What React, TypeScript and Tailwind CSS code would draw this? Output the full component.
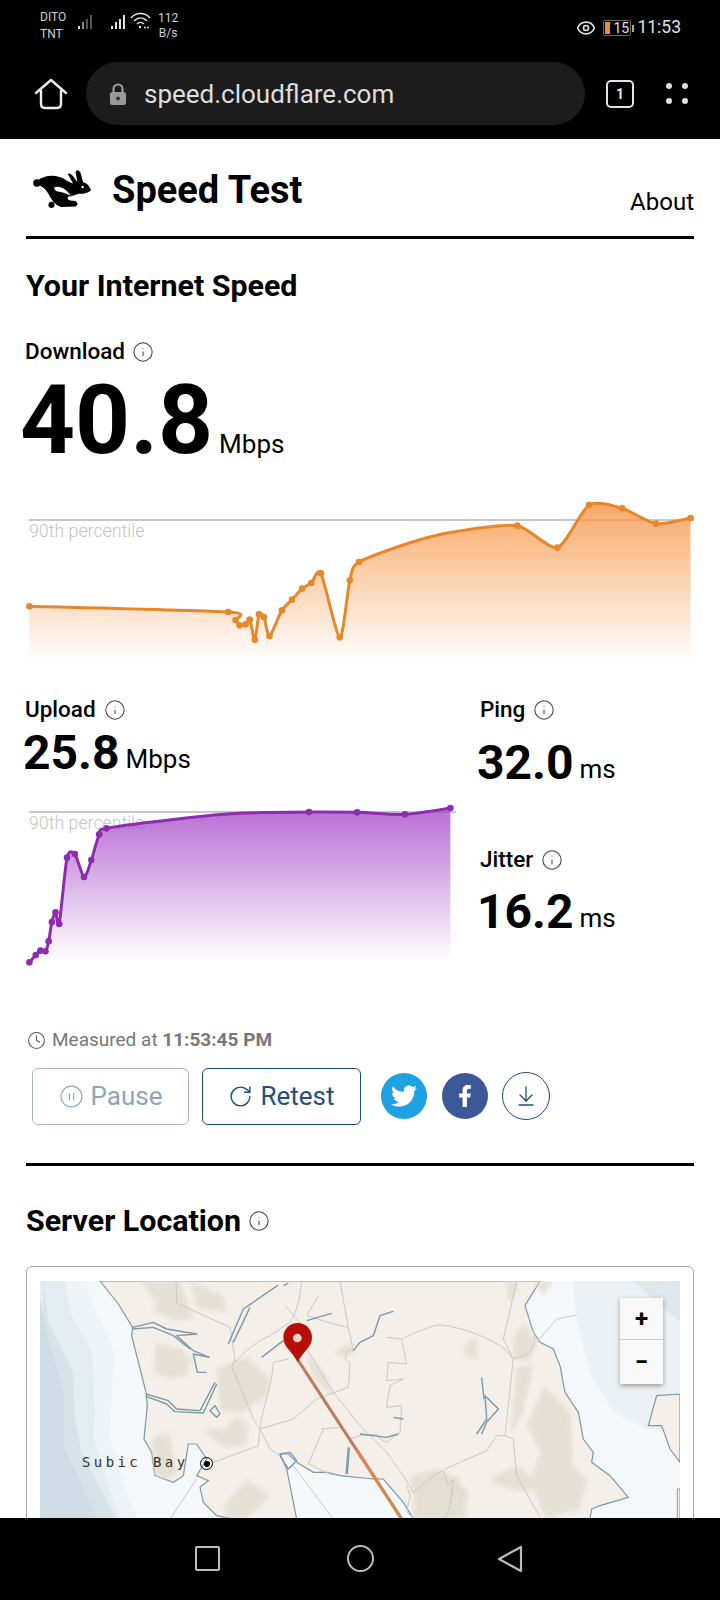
import React from "react";
import { Info, Clock, CirclePause, RotateCw, ArrowDownToLine, Eye } from "lucide-react";
import { FaTwitter, FaFacebookF } from "react-icons/fa";

type P = [number, number, number?];

function smooth(p: P[]) {
  let d = `M${p[0][0].toFixed(1)} ${p[0][1].toFixed(1)}`;
  for (let i = 0; i < p.length - 1; i++) {
    const a = p[Math.max(i - 1, 0)], b = p[i], c = p[i + 1], e = p[Math.min(i + 2, p.length - 1)];
    const k = 0.12;
    d += ` C${(b[0] + (c[0] - a[0]) * k).toFixed(1)} ${(b[1] + (c[1] - a[1]) * k).toFixed(1)} ${(c[0] - (e[0] - b[0]) * k).toFixed(1)} ${(c[1] - (e[1] - b[1]) * k).toFixed(1)} ${c[0].toFixed(1)} ${c[1].toFixed(1)}`;
  }
  return d;
}

const dl: P[] = ([
  [64, 409], [497, 426], [513, 450], [522, 466], [535, 463], [544, 449], [555, 509], [564, 433], [575, 441], [587, 498],
  [614, 421], [636, 389], [658, 356], [678, 339], [699, 310], [740, 502], [762, 331], [782, 276], [900, 215, 0], [1000, 183, 0], [1127, 167],
  [1214, 233], [1283, 105], [1355, 115], [1429, 161], [1504, 144],
] as P[]).map(([x, y, s]) => [x / 2.178 - 26, y / 3, s] as P);

const ul: P[] = ([
  [64, 817], [78, 795], [88, 782], [99, 784], [106, 754], [113, 696], [121, 667], [129, 702], [146, 503], [163, 492], [183, 561],
  [199, 510], [216, 433], [232, 415], [400, 385, 0], [520, 370, 0], [673, 366], [778, 367], [882, 373], [981, 354],
] as P[]).map(([x, y, s]) => [x / 2.178 - 26, y / 3 - 100, s] as P);

function Chart({ pts, w, h, bottom, line, top, id, rule, label }: { pts: P[]; w: number; h: number; bottom: number; line: string; top: string; id: string; rule: number; label: number }) {
  const d = smooth(pts);
  const first = pts[0], last = pts[pts.length - 1];
  return (
    <svg width={w} height={h} viewBox={`0 0 ${w} ${h}`} className="block overflow-visible">
      <defs>
        <linearGradient id={id} gradientUnits="userSpaceOnUse" x1="0" y1={rule - 15} x2="0" y2={bottom}>
          <stop offset="0" stopColor={top} stopOpacity="0.85" />
          <stop offset="1" stopColor={top} stopOpacity="0" />
        </linearGradient>
      </defs>
      <line x1="3" x2={w} y1={rule} y2={rule} stroke="#b5b5b5" strokeWidth="1.5" />
      <text x="3" y={label} fontSize="17.8" fill="#c4c4c4" fontFamily="Roboto, sans-serif" fontWeight="300">90th percentile</text>
      <path d={`${d} L${last[0]} ${bottom} L${first[0]} ${bottom} Z`} fill={`url(#${id})`} />
      <path d={d} fill="none" stroke={line} strokeWidth="3" strokeLinejoin="round" />
      {pts.filter((p) => p[2] !== 0).map((p, i) => (
        <circle key={i} cx={p[0]} cy={p[1]} r="3.3" fill={line} />
      ))}
    </svg>
  );
}

function I({ size = 22 }: { size?: number }) {
  return <Info size={size} strokeWidth={1.15} className="text-[#444] shrink-0" />;
}

function Rabbit() {
  return (
    <svg width="60" height="42" viewBox="38 48 176 124" fill="#000">
      <circle cx="52" cy="92" r="11" />
      <path d="M55 84 C75 68 110 66 135 82 C145 88 152 92 160 94 C172 84 192 88 203 98 L212 112 C205 122 190 124 176 124 C165 127 155 132 145 132 C140 138 142 144 160 145 C174 146 175 160 165 162 L125 163 C112 160 100 150 92 135 C85 120 72 104 60 100 Z" />
      <path d="M160 96 L143 66 C150 60 160 72 172 92 Z" />
      <path d="M172 92 L166 60 C170 50 178 54 182 66 L188 90 Z" />
      <circle cx="95" cy="157" r="9" />
      <path d="M102 106 C120 98 140 112 152 130 C136 122 120 118 108 116 Z" fill="#fff" />
      <circle cx="187" cy="104" r="3.5" fill="#fff" />
    </svg>
  );
}

function Bars({ dim }: { dim?: boolean }) {
  return (
    <svg width="18" height="18" viewBox="0 0 18 18">
      {[[1, 14, 3], [5, 10, 7], [9, 7, 10], [13, 3, 14]].map(([x, y, h], i) => (
        <rect key={i} x={x} y={y} width="2" height={h} fill={dim ? (i === 0 ? "#ddd" : i === 1 ? "#888" : "#555") : "#e4e4e4"} />
      ))}
    </svg>
  );
}

function MapArt() {
  const road = "#cbcac4";
  const water = "#7d98a8";
  const rp = ["M408 6 L410 72 L570 145 L585 240 L575 262 L640 420 L660 450 L690 510 L720 530",
    "M785 6 C780 60 770 100 750 130 L690 170 C640 190 590 240 575 262",
    "M835 50 L800 110 L880 135 L925 145 L900 6",
    "M925 145 L940 215 C925 200 900 245 930 250 L925 325 L830 360 L760 420 L660 450 L655 500 L520 550",
    "M745 240 L700 250 C695 330 670 370 660 450",
    "M735 80 L775 125 L800 210 L880 340 L960 440 L1040 520 L1090 590 L1120 640",
    "M845 450 L905 445 L930 480 L960 470 L1010 465 L1020 480 L1040 490 L1080 460 L1085 380 L1040 385 L1050 320 L1090 300 L1040 305 L1045 250 L1100 255 L1085 180 L1040 175",
    "M1085 180 C1150 150 1190 135 1205 138 C1260 145 1340 170 1395 210 L1420 240 L1395 470 L1370 470 L1340 515 L1215 570",
    "M1420 240 L1390 180 L1430 6",
    "M1395 470 L1420 480 L1430 590 L1500 715",
    "M1490 190 L1550 120 L1610 108",
    "M1420 240 C1480 230 1490 190 1480 160",
    "M1120 640 L1180 590 L1210 575 L1225 620 L1240 600 L1230 680 L1215 720",
    "M850 450 L805 555 L880 590",
    "M390 720 L470 600",
    "M760 560 L880 720",
    "M1100 620 L1110 650 L1100 700 L1125 720",
  ];
  const hills = [
    "M300 6 L420 6 L460 120 L400 125 L340 95 L345 65 Z",
    "M450 6 L550 50 L560 100 L470 90 Z",
    "M345 190 L420 210 L455 240 L435 290 L390 300 L340 280 Z",
    "M530 270 L620 230 L690 300 L680 350 L610 400 L540 400 Z",
    "M590 410 L625 440 L620 500 L550 505 L490 455 L560 445 Z",
    "M335 480 L385 455 L400 530 L410 590 L370 600 L345 590 Z",
    "M550 680 L620 600 L690 650 L620 720 L560 720 Z",
    "M890 210 L935 190 L940 230 L890 235 Z",
    "M800 220 L860 290 L880 350 L820 300 Z",
    "M1110 590 L1190 570 L1260 600 L1280 720 L1130 720 Z",
    "M1400 6 L1440 6 L1420 60 L1400 60 Z",
    "M1420 180 L1450 130 L1490 190 L1470 250 L1420 240 Z",
    "M1430 260 L1480 260 L1450 400 L1410 470 Z",
    "M1350 600 L1430 560 L1500 610 L1460 640 L1370 620 Z",
    "M1510 320 L1590 400 L1600 560 L1640 600 L1620 690 L1520 720 L1470 610 L1500 520 L1460 440 Z",
    "M1480 10 L1540 6 L1510 50 Z",
    "M1500 560 L1540 500 L1550 620 L1510 640 Z",
    "M1270 200 L1310 175 L1315 240 L1280 240 Z",
  ];
  return (
    <svg width="640" height="238" viewBox="0 6 1920 714" preserveAspectRatio="none" className="block">
      <defs>
        <filter id="soft" x="-10%" y="-10%" width="120%" height="120%"><feGaussianBlur stdDeviation="7" /></filter>
      </defs>
      <rect x="0" y="0" width="1920" height="720" fill="#f5f8fb" />
      <path d="M1600 6 L1920 6 L1920 460 L1820 450 L1720 400 L1650 280 L1610 120 Z" fill="#ebf1f5" />
      <path d="M1780 6 L1920 6 L1920 130 L1840 60 Z" fill="#dde7ec" />
      <path d="M140 6 L150 60 L225 220 L212 400 L210 480 L260 640 L295 720 L0 720 L0 6 Z" fill="#edf3f7" />
      <path d="M75 6 L90 100 L155 220 L165 400 L160 480 L210 640 L240 720 L0 720 L0 6 Z" fill="#e3ecf1" />
      <path d="M10 6 L25 130 L100 280 L105 420 L125 530 L190 640 L225 720 L0 720 Z" fill="#d6e3ea" />
      <path d="M0 60 L30 200 L70 330 L70 500 L140 650 L170 720 L0 720 Z" fill="#cedde5" />
      <path d="M180 6 L235 75 L278 145 L275 170 L318 340 L322 380 L312 480 L335 520 L345 590 L400 610 L430 590 L445 495 L470 495 L500 540 L470 590 L505 605 L480 625 L490 670 L530 710 L580 720 L770 720 L740 570 L720 525 L745 525 L770 550 L820 580 L860 580 L900 590 L1000 600 L1030 600 L1090 670 L1120 720 L1650 720 L1655 690 L1680 680 L1765 655 L1710 590 L1655 550 L1660 520 L1630 480 L1615 400 L1575 340 L1560 260 L1540 210 L1500 190 L1480 160 L1455 80 L1500 6 Z" fill="#f4efe9" stroke={water} strokeWidth="1.2" vectorEffect="non-scaling-stroke" />
      <path d="M1825 440 L1850 350 L1920 345 L1920 550 L1890 510 L1865 440 Z" fill="#f4efe9" stroke={water} strokeWidth="1.2" vectorEffect="non-scaling-stroke" />
      <path d="M1912 630 L1920 630 L1920 720 L1912 720 Z" fill="#f4efe9" stroke={water} strokeWidth="1" vectorEffect="non-scaling-stroke" />
      <g filter="url(#soft)" opacity="0.8">
        {hills.map((d, i) => <path key={i} d={d} fill="#e2ddd0" />)}
        <path d="M1120 620 L1180 590 L1240 600 L1290 640 L1260 720 L1120 720 Z" fill="#e2dccd" />
      </g>
      <g fill="none" stroke={road} strokeWidth="1">
        {rp.map((d, i) => <path key={i} d={d} vectorEffect="non-scaling-stroke" />)}
      </g>
      <g fill="none" stroke={water} strokeWidth="1.4" strokeLinejoin="round">
        {[
          "M278 145 L340 130 L380 150 L470 165 L410 170 L460 215 L508 235 L460 225 L472 280 L500 280",
          "M278 150 L340 145 L400 170 L450 210",
          "M318 345 L385 365 L410 390 L480 395 L525 310",
          "M318 352 L380 375 L405 398 L490 402 L530 315",
          "M510 395 L525 380 L540 405 L530 415 Z",
          "M565 195 L610 90 L715 18",
          "M580 190 L630 85",
          "M730 20 L745 12",
          "M665 235 L730 185",
          "M800 125 L875 103",
          "M940 215 L960 190 L1000 170 L1020 110 L1060 97",
          "M720 525 L750 520 L770 545 L745 570 L720 530",
          "M1325 295 L1332 360",
          "M1310 465 L1340 420 L1335 350 L1375 390 L1340 430 L1325 465",
          "M1060 415 L1090 420",
          "M960 465 L1040 475 L1075 465",
          "M925 505 L918 585",
          "M928 505 L922 585",
        ].map((d, i) => <path key={i} d={d} vectorEffect="non-scaling-stroke" />)}
      </g>
      <line x1="775" y1="245" x2="1085" y2="720" stroke="#bd7a5c" strokeWidth="3" vectorEffect="non-scaling-stroke" />
      <line x1="950" y1="512" x2="1085" y2="720" stroke="#d58a50" strokeWidth="3" vectorEffect="non-scaling-stroke" />
      <path d="M773 250 C755 215 730 205 730 175 C730 150 750 132 773 132 C796 132 816 150 816 175 C816 205 791 215 773 250 Z" fill="#b70f08" />
      <ellipse cx="772" cy="177" rx="13" ry="13" fill="#f1d4c8" />
    </svg>
  );
}

export default function App() {
  return (
    <div className="h-[1600px] w-[720px] flex flex-col overflow-hidden bg-white text-black font-['Roboto',sans-serif]">
      <header className="bg-black h-[139px] shrink-0 flex flex-col">
        <div className="h-[62px] flex items-start justify-between pl-[40px] pr-[38px] pt-[9px] text-[#d0d0d0]">
          <div className="flex items-start">
            <div className="text-[12px] leading-[17px] w-[37px]"><div>DITO</div><div>TNT</div></div>
            <div className="mt-[3px] flex items-center gap-[15px]"><Bars dim /><div className="flex items-center gap-[2px]"><Bars />
              <svg width="21" height="18" viewBox="0 0 21 18" fill="none" stroke="#e4e4e4" strokeWidth="1.6"><path d="M1 6 C6 0 15 0 20 6" /><path d="M4 9 C8 5 13 5 17 9" /><path d="M7 12 C9 10 12 10 14 12" /><circle cx="10" cy="15" r="1.2" fill="#e4e4e4" stroke="none" /><circle cx="15" cy="15.5" r="1" fill="#e4e4e4" stroke="none" /><circle cx="18" cy="15.5" r="1" fill="#e4e4e4" stroke="none" /></svg></div></div>
            <div className="text-[12px] leading-[15px] ml-[7px] mt-[2px] text-center"><div>112</div><div>B/s</div></div>
          </div>
          <div className="flex items-center mt-[9px] text-[#e0e0e0]">
            <Eye size={20} strokeWidth={2} />
            <div className="ml-[7px] relative h-[16px] w-[28px] border border-[#666] rounded-[2px] flex items-center text-[14px] leading-none">
              <div className="w-[5px] h-[12px] ml-[1px] bg-[#e8912f]" /><span className="ml-[3px]">15</span>
            </div>
            <div className="w-[2px] h-[7px] bg-[#aaa] ml-[1px]" />
            <span className="text-[17.5px] leading-none ml-[3px] mr-[1px]">11:53</span>
          </div>
        </div>
        <div className="flex items-center pl-[34px]">
          <svg width="34" height="32" viewBox="0 0 34 32" fill="none" stroke="#eee" strokeWidth="2.4" strokeLinejoin="round" strokeLinecap="round"><path d="M2 15 L17 2 L32 15" /><path d="M7 13 V26 Q7 30 11 30 H23 Q27 30 27 26 V13" /></svg>
          <div className="ml-[18px] w-[499px] h-[63px] rounded-full bg-[#1c1c1c] flex items-center pl-[23px]">
            <svg width="18" height="24" viewBox="0 0 18 24"><path d="M4.5 11 V7 a4.5 4.5 0 0 1 9 0 V11" fill="none" stroke="#9a9a9a" strokeWidth="2.2" /><rect x="1" y="10" width="16" height="13" rx="2.5" fill="#9a9a9a" /><circle cx="9" cy="16.5" r="2" fill="#333" /></svg>
            <span className="ml-[17px] text-[26px] text-[#dedede] leading-none">speed.cloudflare.com</span>
          </div>
          <div className="ml-[21px] w-[28px] h-[28px] border-[2.5px] border-[#e4e4e4] rounded-[5px] flex items-center justify-center text-[#e4e4e4] text-[14px] font-bold leading-none">1</div>
          <div className="ml-[32px] grid grid-cols-2 gap-x-[10px] gap-y-[9px]">
            {[0, 1, 2, 3].map((i) => <div key={i} className="w-[6px] h-[6px] rounded-full bg-[#dedede]" />)}
          </div>
        </div>
      </header>

      <main className="flex-1 overflow-hidden px-[26px] min-h-0">
        <div className="h-[97px] flex justify-between items-end relative">
          <div className="flex items-center absolute left-[6px] top-[27px]">
            <Rabbit />
            <span className="ml-[20px] mt-[2px] text-[38px] leading-[44px] font-bold">Speed Test</span>
          </div>
          <span />
          <span className="text-[24px] leading-[28px] mb-[20px]">About</span>
        </div>
        <div className="h-[3px] bg-black" />
        <h2 className="mt-[30px] text-[30.4px] leading-[34px] font-bold">Your Internet Speed</h2>
        <div className="mt-[36px] flex items-center gap-[7px] h-[26px] text-[22.5px] font-medium -ml-[1px]">Download <I /></div>
        <div className="mt-[5px] h-[100px] flex items-end -ml-[6px]">
          <span className="text-[96px] leading-[100px] font-bold">40.8</span>
          <span className="text-[26px] leading-[30px] ml-[6px] mb-[11px]">Mbps</span>
        </div>
        <Chart pts={dl} w={668} h={220} bottom={193} line="#e8862a" top="#f79a4e" id="dlg" rule={50} label={67} />
        <div className="flex mt-[7px]">
          <div className="w-[454px] shrink-0">
            <div className="flex items-center gap-[8px] h-[26px] text-[22.5px] font-medium -ml-[1px]">Upload <I /></div>
            <div className="flex items-end -ml-[3px] h-[57px]">
              <span className="text-[48px] leading-[54px] font-bold">25.8</span>
              <span className="text-[26px] leading-[30px] ml-[6px] mb-[6px]">Mbps</span>
            </div>
            <div className="mt-[10px]">
              <Chart pts={ul} w={430} h={200} bottom={172} line="#8d2cae" top="#a647c8" id="ulg" rule={22} label={39} />
            </div>
          </div>
          <div className="flex-1">
            <div className="flex items-center gap-[8px] h-[26px] text-[22.5px] font-medium">Ping <I /></div>
            <div className="flex items-end -ml-[3px] h-[67px]">
              <span className="text-[48px] leading-[54px] font-bold">32.0</span>
              <span className="text-[26px] leading-[30px] ml-[6px] mb-[6px]">ms</span>
            </div>
            <div className="mt-[57px] flex items-center gap-[8px] h-[26px] text-[22.5px] font-medium">Jitter <I /></div>
            <div className="flex items-end -ml-[3px] h-[66px]">
              <span className="text-[48px] leading-[54px] font-bold">16.2</span>
              <span className="text-[26px] leading-[30px] ml-[6px] mb-[6px]">ms</span>
            </div>
          </div>
        </div>
        <div className="mt-[39px] ml-[1px] flex items-center h-[22px] text-[19px] text-[#777]">
          <Clock size={19} strokeWidth={1.3} className="text-[#555]" />
          <span className="ml-[6px]">Measured at <span className="font-bold">11:53:45 PM</span></span>
        </div>
        <div className="mt-[16px] ml-[6px] flex items-center h-[58px]">
          <div className="w-[157px] h-[57px] border border-[#a5b8c6] rounded-[6px] flex items-center justify-center gap-[7px] text-[26px] text-[#8fa6b8]">
            <CirclePause size={25} strokeWidth={1.1} />Pause
          </div>
          <div className="ml-[13px] w-[159px] h-[57px] border border-[#1d4a7c] rounded-[6px] flex items-center justify-center gap-[7px] text-[26px] text-[#1f4f80]">
            <RotateCw size={25} strokeWidth={1.4} />Retest
          </div>
          <div className="ml-[20px] w-[46px] h-[46px] rounded-full bg-[#1da1e2] flex items-center justify-center text-white"><FaTwitter size={26} /></div>
          <div className="ml-[15px] w-[46px] h-[46px] rounded-full bg-[#3b5998] flex items-center justify-center text-white"><FaFacebookF size={22} /></div>
          <div className="ml-[14px] w-[48px] h-[48px] rounded-full border border-[#1d4a7c] flex items-center justify-center text-[#1f4f80]"><ArrowDownToLine size={24} strokeWidth={1.3} /></div>
        </div>
        <div className="mt-[38px] h-[3px] bg-black" />
        <div className="mt-[38px] flex items-center gap-[7px] h-[34px] text-[30.4px] font-bold">Server Location <I /></div>
        <div className="mt-[28px] border border-[#a8a8a8] rounded-[6px] px-[13px] pt-[14px] pb-[40px]">
          <div className="relative w-[640px] h-[238px]">
            <MapArt />
            <div className="absolute right-[17px] top-[17px] w-[43px] h-[86px] bg-[#f8f8f8] shadow-[0_2px_5px_rgba(0,0,0,0.35)] flex flex-col text-black font-bold">
              <div className="h-[42px] border-b border-[#ccc] flex items-center justify-center text-[24px] leading-none">+</div>
              <div className="flex-1 flex items-center justify-center text-[24px] leading-none">−</div>
            </div>
            <span className="absolute left-[42px] top-[172px] text-[14px] leading-[18px] tracking-[3.4px] text-[#333] font-['DejaVu_Sans_Mono',monospace] font-light">Subic Bay</span>
            <div className="absolute left-[160px] top-[176px] w-[13px] h-[13px] rounded-full border border-black flex items-center justify-center"><div className="w-[6px] h-[6px] rounded-full bg-black" /></div>
          </div>
        </div>
      </main>

      <nav className="bg-black h-[82px] shrink-0 flex items-center justify-center pb-[1px]">
        <div className="flex items-center pr-[3px]">
          <div className="w-[25px] h-[25px] border-2 border-[#bdbdbd] rounded-[2px]" />
          <div className="ml-[127px] w-[27px] h-[27px] border-2 border-[#bdbdbd] rounded-full" />
          <svg className="ml-[123px]" width="26" height="28" viewBox="0 0 26 28" fill="none" stroke="#bdbdbd" strokeWidth="2.2" strokeLinejoin="round"><path d="M24 2 V26 L2 14 Z" /></svg>
        </div>
      </nav>
    </div>
  );
}
